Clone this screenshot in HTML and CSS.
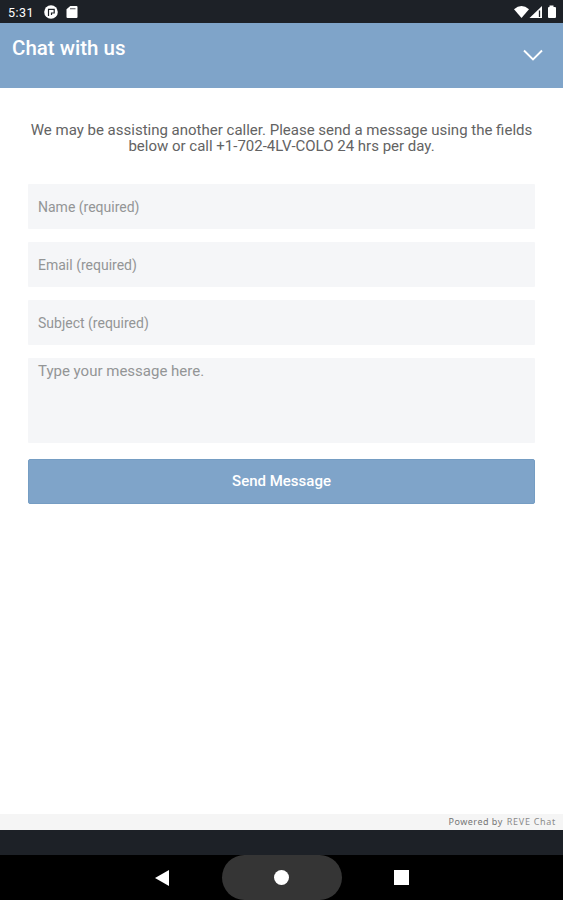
FILE: index.html
```html
<!DOCTYPE html>
<html lang="en">
<head>
<meta charset="utf-8">
<title>Chat with us</title>
<link rel="stylesheet" href="styles.css">
</head>
<body>
<div class="status-bar">
  <span class="clock">5:31</span>
  <svg class="app-icon" width="14" height="14" viewBox="0 0 14 14"><circle cx="7" cy="7" r="6.8" fill="#fff"/><path d="M4.500 11V4.300H10.200V8H7.500V10" fill="none" stroke="#1d2127" stroke-width="1.200"/></svg>
  <svg class="card-icon" width="12" height="14" viewBox="0 0 12 14"><path d="M4.3 1H10.500q1 0 1 1v10q0 1-1 1H1.500q-1 0-1-1V4.3z" fill="#fff"/><path d="M4 3.700h5.500" stroke="#1d2127" stroke-opacity=".65" stroke-width="1.200"/></svg>
  <svg class="signal-icons" width="44" height="16" viewBox="0 0 44 16"><path d="M0 5.2Q7.500 -1 15 5.2L7.500 14z" fill="#fff"/><path d="M28 2v12H15.500z" fill="#fff"/><path d="M25.500 6.500v6.500" stroke="#1d2127" stroke-width="1.300"/><path d="M35.5 1.500h4v1.500H41q1 0 1 1V13q0 1-1 1h-6q-1 0-1-1V4q0-1 1-1h.5z" fill="#fff"/></svg>
</div>
<header class="chat-header">
  <h1>Chat with us</h1>
  <svg class="chevron" width="20" height="13" viewBox="0 0 20 13"><path d="M1 1.500L10 10.500L19 1.500" fill="none" stroke="#fff" stroke-width="1.9"/></svg>
</header>
<main>
  <p class="intro">We may be assisting another caller. Please send a message using the fields<br>below or call +1-702-4LV-COLO 24 hrs per day.</p>
  <form>
    <input class="field" type="text" placeholder="Name (required)">
    <input class="field" type="text" placeholder="Email (required)">
    <input class="field" type="text" placeholder="Subject (required)">
    <textarea class="field message" placeholder="Type your message here."></textarea>
    <button type="button">Send Message</button>
  </form>
</main>
<footer><span class="powered">Powered by</span><span class="brand">REVE Chat</span></footer>
<div class="band"></div>
<nav class="system-nav">
  <svg class="back" width="15" height="16" viewBox="0 0 15 16"><path d="M0 8L14 0v16z" fill="#fff"/></svg>
  <div class="home"><span class="home-dot"></span></div>
  <span class="recent"></span>
</nav>
</body>
</html>
```
FILE: styles.css
```css
* { box-sizing: border-box; }
body {
  margin: 0;
  width: 563px;
  height: 900px;
  display: flex;
  flex-direction: column;
  overflow: hidden;
  background: #fff;
  font-family: Roboto, sans-serif;
}
.status-bar {
  height: 23px;
  flex: none;
  display: flex;
  align-items: center;
  padding: 1px 5px 0 8px;
  background: #1d2127;
  color: #fff;
}
.clock { width: 36px; font-size: 12.5px; letter-spacing: .5px; }
.app-icon { margin-right: 8px; }
.signal-icons { margin-left: auto; }
.chat-header {
  height: 65px;
  flex: none;
  display: flex;
  justify-content: space-between;
  padding: 13px 20px 0 12px;
  background: #7fa4c9;
  color: #fff;
}
h1 { margin: 0; font-size: 20.5px; line-height: 24px; font-weight: 500; }
.chevron { margin-top: 13px; }
main { flex: 1; padding: 34px 28px 0; }
.intro {
  margin: 0 0 29px;
  height: 33px;
  font-size: 15px;
  line-height: 16px;
  text-align: center;
  white-space: nowrap;
  color: #636363;
}
form { display: flex; flex-direction: column; }
.field {
  width: 507px;
  height: 45px;
  margin: 0 0 13px;
  padding: 1px 10px 0;
  border: 0;
  border-radius: 1px;
  outline: 0;
  resize: none;
  background: #f5f6f8;
  font: 14px Roboto, sans-serif;
}
.field::placeholder { color: #939596; opacity: 1; }
.message { height: 85px; margin-bottom: 16px; padding-top: 4px; font-size: 15px; }
button {
  width: 507px;
  height: 45px;
  padding: 0 0 2px;
  border: 1px solid #759dc3;
  border-radius: 2px;
  background: #7fa4c9;
  color: #fff;
  font: 500 15px Roboto, sans-serif;
}
footer {
  height: 16px;
  flex: none;
  display: flex;
  justify-content: flex-end;
  gap: 4px;
  padding-right: 7px;
  background: #f5f5f5;
  font: 9px/16px "Noto Sans", sans-serif;
  letter-spacing: .5px;
  color: #757575;
}
.brand { color: #8b8b8b; letter-spacing: .7px; }
.band { height: 25px; flex: none; background: #1d2127; }
.system-nav {
  height: 45px;
  flex: none;
  display: flex;
  align-items: center;
  background: #000;
}
.back { margin-left: 155px; margin-right: 52px; }
.home {
  width: 120px;
  height: 45px;
  border-radius: 23px;
  background: #353535;
  display: flex;
  align-items: center;
  justify-content: center;
}
.home-dot { width: 15px; height: 15px; margin-right: 1px; border-radius: 50%; background: #fff; }
.recent { width: 15px; height: 15px; margin-left: 52px; background: #fff; }
```
